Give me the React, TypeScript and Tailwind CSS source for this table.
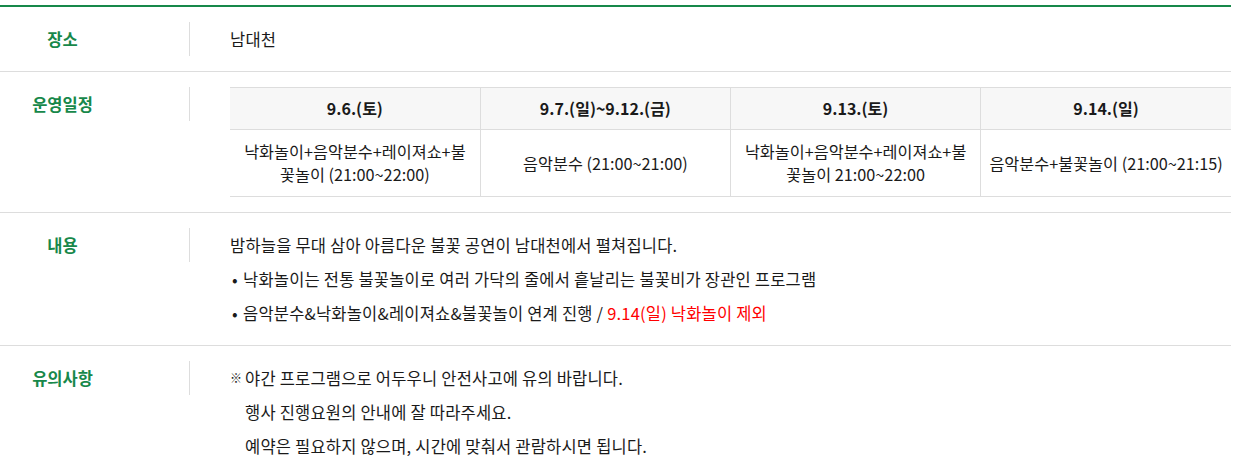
import React from 'react';

const font = { fontFamily: '"Noto Sans CJK KR", "Noto Sans", sans-serif' };

const schedule = [
    { date: '9.6.(토)', desc: '낙화놀이+음악분수+레이져쇼+불꽃놀이 (21:00~22:00)' },
    { date: '9.7.(일)~9.12.(금)', desc: '음악분수 (21:00~21:00)' },
    { date: '9.13.(토)', desc: '낙화놀이+음악분수+레이져쇼+불꽃놀이 21:00~22:00' },
    { date: '9.14.(일)', desc: '음악분수+불꽃놀이 (21:00~21:15)' },
];

const Row = ({ label, children, last }: { label: string; children: React.ReactNode; last?: boolean }) => (
    <div className={`flex py-[15px] ${last ? '' : 'border-b border-[#dddddd]'}`}>
        <div className="w-[190px] shrink-0">
            <div className="w-[190px] pr-[64px] border-r border-[#dddddd] text-center text-[16.5px] leading-[34px] font-bold text-[#17884a]">
                {label}
            </div>
        </div>
        <div className="flex-1 pl-[40px] text-[16.5px] leading-[34px] tracking-[0.2px] text-[#1a1a1a]">{children}</div>
    </div>
);

const App = () => {
    return (
        <div className="bg-white min-h-screen pt-[5px]" style={font}>
            <div className="w-[1231px] border-t-2 border-[#17884a]">
                <Row label="장소">남대천</Row>

                <Row label="운영일정">
                    <table className="w-full table-fixed border-collapse tracking-normal">
                        <thead>
                            <tr className="bg-[#f7f7f7]">
                                {schedule.map((s, i) => (
                                    <th
                                        key={s.date}
                                        className={`border-t border-b border-[#dddddd] py-[9px] text-[16px] leading-[23px] font-bold text-[#1a1a1a] ${i > 0 ? 'border-l' : ''}`}
                                    >
                                        {s.date}
                                    </th>
                                ))}
                            </tr>
                        </thead>
                        <tbody>
                            <tr>
                                {schedule.map((s, i) => (
                                    <td
                                        key={s.date}
                                        className={`border-b border-[#dddddd] px-[8px] py-[10px] text-center text-[16.25px] leading-[23px] text-[#1a1a1a] ${i > 0 ? 'border-l' : ''}`}
                                    >
                                        {s.desc}
                                    </td>
                                ))}
                            </tr>
                        </tbody>
                    </table>
                </Row>

                <Row label="내용">
                    <p>밤하늘을 무대 삼아 아름다운 불꽃 공연이 남대천에서 펼쳐집니다.</p>
                    <p className="flex">
                        <span className="w-[13px] pl-[2px] shrink-0">•</span>
                        <span>낙화놀이는 전통 불꽃놀이로 여러 가닥의 줄에서 흩날리는 불꽃비가 장관인 프로그램</span>
                    </p>
                    <p className="flex">
                        <span className="w-[13px] pl-[2px] shrink-0">•</span>
                        <span>
                            음악분수&amp;낙화놀이&amp;레이져쇼&amp;불꽃놀이 연계 진행 /{' '}
                            <span className="text-[#ff0000]">9.14(일) 낙화놀이 제외</span>
                        </span>
                    </p>
                </Row>

                <Row label="유의사항" last>
                    <p className="flex">
                        <span className="w-[15px] shrink-0 text-[12px] font-bold">※</span>
                        <span>야간 프로그램으로 어두우니 안전사고에 유의 바랍니다.</span>
                    </p>
                    <p className="pl-[15px]">행사 진행요원의 안내에 잘 따라주세요.</p>
                    <p className="pl-[15px]">예약은 필요하지 않으며, 시간에 맞춰서 관람하시면 됩니다.</p>
                </Row>
            </div>
        </div>
    );
};

export default App;
